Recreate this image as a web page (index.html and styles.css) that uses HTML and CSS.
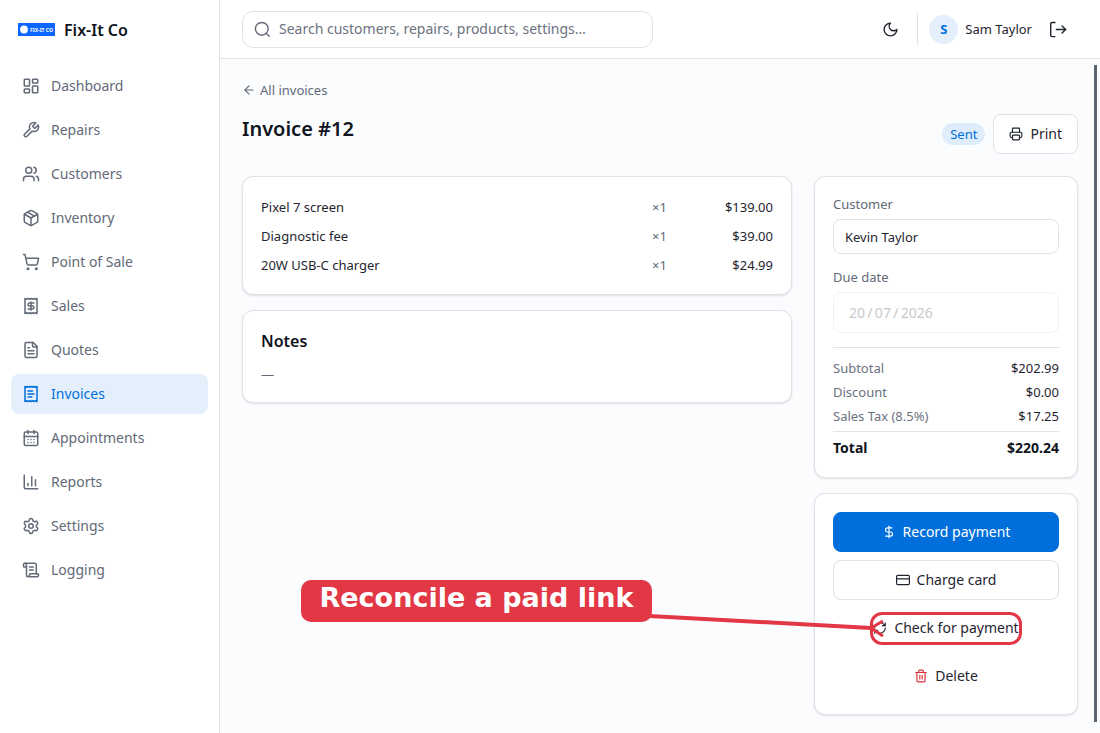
FILE: index.html
```html
<!DOCTYPE html>
<html lang="en">
<head>
<meta charset="UTF-8">
<meta name="viewport" content="width=device-width, initial-scale=1.0">
<title>Invoice #12 - Fix-It Co</title>
<link rel="stylesheet" href="styles.css">
</head>
<body>

<div class="app">
    <aside class="sidebar">
        <div class="brand">
            <svg class="brand-logo" viewBox="0 0 37 13" aria-hidden="true">
                <rect width="37" height="13" fill="#0b66ff"/>
                <circle cx="6" cy="6.500" r="3.900" fill="#fff"/>
                <text x="12" y="8.500" class="brand-logo-text">FIX-IT CO</text>
            </svg>
            <span class="brand-name">Fix-It Co</span>
        </div>

        <nav class="nav">
            <a href="#">
                <svg class="icon" viewBox="0 0 24 24"><rect width="7" height="9" x="3" y="3" rx="1"/><rect width="7" height="5" x="14" y="3" rx="1"/><rect width="7" height="9" x="14" y="12" rx="1"/><rect width="7" height="5" x="3" y="16" rx="1"/></svg>
                Dashboard
            </a>
            <a href="#">
                <svg class="icon" viewBox="0 0 24 24"><path d="M14.700 6.300a1 1 0 0 0 0 1.400l1.600 1.600a1 1 0 0 0 1.400 0l3.770-3.770a6 6 0 0 1-7.940 7.940l-6.910 6.910a2.120 2.120 0 0 1-3-3l6.910-6.910a6 6 0 0 1 7.940-7.940l-3.760 3.760z"/></svg>
                Repairs
            </a>
            <a href="#">
                <svg class="icon" viewBox="0 0 24 24"><path d="M16 21v-2a4 4 0 0 0-4-4H6a4 4 0 0 0-4 4v2"/><circle cx="9" cy="7" r="4"/><path d="M22 21v-2a4 4 0 0 0-3-3.870"/><path d="M16 3.130a4 4 0 0 1 0 7.750"/></svg>
                Customers
            </a>
            <a href="#">
                <svg class="icon" viewBox="0 0 24 24"><path d="M11 21.730a2 2 0 0 0 2 0l7-4A2 2 0 0 0 21 16V8a2 2 0 0 0-1-1.730l-7-4a2 2 0 0 0-2 0l-7 4A2 2 0 0 0 3 8v8a2 2 0 0 0 1 1.730z"/><path d="M12 22V12"/><path d="m3.300 7 8.700 5 8.700-5"/><path d="m7.500 4.270 9 5.150"/></svg>
                Inventory
            </a>
            <a href="#">
                <svg class="icon" viewBox="0 0 24 24"><circle cx="8" cy="21" r="1"/><circle cx="19" cy="21" r="1"/><path d="M2.050 2.050h2l2.660 12.420a2 2 0 0 0 2 1.580h9.780a2 2 0 0 0 1.950-1.570l1.650-7.430H5.120"/></svg>
                Point of Sale
            </a>
            <a href="#">
                <svg class="icon" viewBox="0 0 24 24"><path d="M4 2v20l2-1 2 1 2-1 2 1 2-1 2 1 2-1 2 1V2l-2 1-2-1-2 1-2-1-2 1-2-1-2 1Z"/><path d="M16 8h-6a2 2 0 1 0 0 4h4a2 2 0 1 1 0 4H8"/><path d="M12 17.500v-11"/></svg>
                Sales
            </a>
            <a href="#">
                <svg class="icon" viewBox="0 0 24 24"><path d="M15 2H6a2 2 0 0 0-2 2v16a2 2 0 0 0 2 2h12a2 2 0 0 0 2-2V7Z"/><path d="M14 2v4a2 2 0 0 0 2 2h4"/><path d="M10 9H8"/><path d="M16 13H8"/><path d="M16 17H8"/></svg>
                Quotes
            </a>
            <a href="#" class="active">
                <svg class="icon" viewBox="0 0 24 24"><path d="M4 2v20l2-1 2 1 2-1 2 1 2-1 2 1 2-1 2 1V2l-2 1-2-1-2 1-2-1-2 1-2-1-2 1Z"/><path d="M14 8H8"/><path d="M16 12H8"/><path d="M13 16H8"/></svg>
                Invoices
            </a>
            <a href="#">
                <svg class="icon" viewBox="0 0 24 24"><path d="M8 2v4"/><path d="M16 2v4"/><rect width="18" height="18" x="3" y="4" rx="2"/><path d="M3 10h18"/><path d="M8 14h.010"/><path d="M12 14h.010"/><path d="M16 14h.010"/><path d="M8 18h.010"/><path d="M12 18h.010"/><path d="M16 18h.010"/></svg>
                Appointments
            </a>
            <a href="#">
                <svg class="icon" viewBox="0 0 24 24"><path d="M3 3v16a2 2 0 0 0 2 2h16"/><path d="M18 17V9"/><path d="M13 17V5"/><path d="M8 17v-3"/></svg>
                Reports
            </a>
            <a href="#">
                <svg class="icon" viewBox="0 0 24 24"><path d="M9.671 4.136a2.340 2.340 0 0 1 4.659 0 2.340 2.340 0 0 0 3.319 1.915 2.340 2.340 0 0 1 2.330 4.033 2.340 2.340 0 0 0 0 3.831 2.340 2.340 0 0 1-2.330 4.033 2.340 2.340 0 0 0-3.319 1.915 2.340 2.340 0 0 1-4.659 0 2.340 2.340 0 0 0-3.320-1.915 2.340 2.340 0 0 1-2.330-4.033 2.340 2.340 0 0 0 0-3.831A2.340 2.340 0 0 1 6.350 6.051a2.340 2.340 0 0 0 3.319-1.915"/><circle cx="12" cy="12" r="3"/></svg>
                Settings
            </a>
            <a href="#">
                <svg class="icon" viewBox="0 0 24 24"><path d="M15 12h-5"/><path d="M15 8h-5"/><path d="M19 17V5a2 2 0 0 0-2-2H4"/><path d="M8 21h12a2 2 0 0 0 2-2v-1a1 1 0 0 0-1-1H11a1 1 0 0 0-1 1v1a2 2 0 1 1-4 0V5a2 2 0 1 0-4 0v2a1 1 0 0 0 1 1h3"/></svg>
                Logging
            </a>
        </nav>
    </aside>

    <div class="page">
        <header class="topbar">
            <label class="search">
                <svg class="icon" viewBox="0 0 24 24"><circle cx="11" cy="11" r="9"/><path d="m21.500 21.500-4-4"/></svg>
                <input type="search" aria-label="Search" placeholder="Search customers, repairs, products, settings…">
            </label>
            <div class="user-menu">
                <button class="icon-button" type="button" aria-label="Toggle dark mode">
                    <svg class="icon" viewBox="0 0 24 24"><path d="M12 3a6 6 0 0 0 9 9 9 9 0 1 1-9-9Z"/></svg>
                </button>
                <div class="user">
                    <span class="avatar">S</span>
                    <span>Sam Taylor</span>
                </div>
                <button class="icon-button" type="button" aria-label="Sign out">
                    <svg class="icon" viewBox="0 0 24 24"><path d="M7 22H3a2 2 0 0 1-2-2V4a2 2 0 0 1 2-2h4"/><path d="m17 17 5-5-5-5"/><path d="M22 12H9"/></svg>
                </button>
            </div>
        </header>

        <main class="content">
            <a class="back-link" href="#">
                <svg class="icon icon-small" viewBox="0 0 24 24"><path d="m12 19-7-7 7-7"/><path d="M19 12H5"/></svg>
                All invoices
            </a>
            <div class="title-row">
                <h1>Invoice #12</h1>
                <div class="title-actions">
                    <span class="badge">Sent</span>
                    <button class="button print-button" type="button">
                        <svg class="icon icon-small" viewBox="0 0 24 24"><path d="M6 18H4a2 2 0 0 1-2-2v-5a2 2 0 0 1 2-2h16a2 2 0 0 1 2 2v5a2 2 0 0 1-2 2h-2"/><path d="M6 9V3a1 1 0 0 1 1-1h10a1 1 0 0 1 1 1v6"/><rect x="6" y="14" width="12" height="8" rx="1"/></svg>
                        Print
                    </button>
                </div>
            </div>

            <div class="columns">
                <div class="column">
                    <section class="card items">
                        <table>
                            <tr><td>Pixel 7 screen</td><td class="qty">×1</td><td class="price">$139.00</td></tr>
                            <tr><td>Diagnostic fee</td><td class="qty">×1</td><td class="price">$39.00</td></tr>
                            <tr><td>20W USB-C charger</td><td class="qty">×1</td><td class="price">$24.99</td></tr>
                        </table>
                    </section>
                    <section class="card notes">
                        <h2>Notes</h2>
                        <p>—</p>
                    </section>
                </div>

                <div class="column">
                    <section class="card details">
                        <label for="customer">Customer</label>
                        <input id="customer" class="customer" type="text" value="Kevin Taylor">
                        <label for="due">Due date</label>
                        <input id="due" class="due" type="text" value="20&thinsp;/&thinsp;07&thinsp;/&thinsp;2026" disabled>
                        <dl class="totals">
                            <div><dt>Subtotal</dt><dd>$202.99</dd></div>
                            <div><dt>Discount</dt><dd>$0.00</dd></div>
                            <div><dt>Sales Tax (8.5%)</dt><dd>$17.25</dd></div>
                            <div class="total"><dt>Total</dt><dd>$220.24</dd></div>
                        </dl>
                    </section>

                    <section class="card actions">
                        <button class="button primary" type="button">
                            <svg class="icon icon-small" viewBox="0 0 24 24"><path d="M12 2v20"/><path d="M17 5H9.500a3.500 3.500 0 0 0 0 7h5a3.500 3.500 0 0 1 0 7H6"/></svg>
                            Record payment
                        </button>
                        <button class="button" type="button">
                            <svg class="icon icon-small" viewBox="0 0 24 24"><rect width="22" height="16" x="1" y="4" rx="2"/><path d="M1 10h22"/></svg>
                            Charge card
                        </button>
                        <div class="highlight">
                            <button class="button ghost" type="button">
                                <svg class="icon icon-small" viewBox="0 0 24 24"><path d="M3 12a9 9 0 0 1 9-9 9.750 9.750 0 0 1 6.740 2.740L21 8"/><path d="M21 3v5h-5"/><path d="M21 12a9 9 0 0 1-9 9 9.750 9.750 0 0 1-6.740-2.740L3 16"/><path d="M8 16H3v5"/></svg>
                                Check for payment
                            </button>
                            <!-- callout drawn over the page -->
                            <div class="ring">
                                <svg class="arrow" viewBox="0 0 240 30" aria-hidden="true"><path d="M0 6 L222 18" stroke-width="4"/><path d="M234 11 L222 18 L234 26" stroke-width="3"/></svg>
                                <div class="callout">Reconcile a paid link</div>
                            </div>
                        </div>
                        <button class="button ghost" type="button">
                            <svg class="icon icon-small danger" viewBox="0 0 24 24"><path d="M10 11v6"/><path d="M14 11v6"/><path d="M19 6v14a2 2 0 0 1-2 2H7a2 2 0 0 1-2-2V6"/><path d="M3 6h18"/><path d="M8 6V4a2 2 0 0 1 2-2h4a2 2 0 0 1 2 2v2"/></svg>
                            Delete
                        </button>
                    </section>
                </div>
            </div>
            <div class="scroll-thumb"></div>
        </main>
    </div>
</div>

</body>
</html>
```

FILE: styles.css
```css
* {
    box-sizing: border-box;
}
body {
    margin: 0;
    font-family: "Noto Sans", sans-serif;
    font-size: 13px;
    line-height: 20px;
    color: #1f2530;
    background-color: #fbfcfe;
}
h1, h2, p, dl, dd {
    margin: 0;
}
a {
    color: inherit;
    text-decoration: none;
}
button, input {
    font: inherit;
    color: inherit;
}
.app {
    display: grid;
    grid-template-columns: 220px 1fr;
    min-height: 100vh;
}
.icon {
    width: 18px;
    height: 18px;
    flex-shrink: 0;
    fill: none;
    stroke: currentColor;
    stroke-width: 2;
    stroke-linecap: round;
    stroke-linejoin: round;
}
.icon-small {
    width: 14px;
    height: 14px;
}

/* Sidebar */
.sidebar {
    background-color: #fff;
    border-right: 1px solid #dfe2e6;
}
.brand {
    display: flex;
    align-items: center;
    gap: 9px;
    height: 59px;
    padding: 0 18px;
}
.brand-logo {
    width: 37px;
    height: 13px;
}
.brand-logo-text {
    font-size: 5px;
    font-weight: 700;
    fill: #fff;
}
.brand-name {
    font-size: 16px;
    font-weight: 600;
    color: #10141c;
}
.nav {
    display: flex;
    flex-direction: column;
    gap: 4px;
    padding: 7px 11px;
}
.nav a {
    display: flex;
    align-items: center;
    gap: 11px;
    height: 40px;
    padding: 0 11px;
    border-radius: 8px;
    font-size: 14px;
    color: #626977;
}
.nav a.active {
    color: #006fdb;
    background-color: #e4effb;
}

/* Top bar */
.page {
    display: flex;
    flex-direction: column;
    min-width: 0;
}
.topbar {
    display: flex;
    align-items: center;
    justify-content: space-between;
    height: 59px;
    padding: 0 33px 0 22px;
    background-color: #fff;
    border-bottom: 1px solid #dfe2e6;
}
.search {
    display: flex;
    align-items: center;
    gap: 8px;
    width: 411px;
    height: 37px;
    padding: 0 11px;
    border: 1px solid #dfe2e6;
    border-radius: 11px;
    color: #626977;
}
.search .icon,
.user-menu .icon {
    width: 17px;
    height: 17px;
}
.search input {
    flex: 1;
    min-width: 0;
    padding: 0;
    border: 0;
    outline: 0;
    background: none;
    font-size: 14px;
}
.search input::placeholder {
    color: #6b7280;
}
.user-menu {
    display: flex;
    align-items: center;
    gap: 18px;
}
.icon-button {
    display: flex;
    padding: 0;
    border: 0;
    background: none;
}
.user {
    display: flex;
    align-items: center;
    gap: 7px;
    height: 32px;
    padding-left: 11px;
    border-left: 1px solid #dfe2e6;
}
.avatar {
    width: 29px;
    height: 29px;
    border-radius: 50%;
    line-height: 29px;
    text-align: center;
    font-weight: 700;
    color: #006fdb;
    background-color: #e4effb;
}

/* Invoice */
.content {
    position: relative;
    flex: 1;
    padding: 21px 22px 18px;
}
.back-link {
    display: flex;
    align-items: center;
    gap: 4px;
    width: fit-content;
    font-size: 13px;
    color: #626977;
}
.title-row {
    display: flex;
    justify-content: space-between;
    align-items: flex-start;
    margin-top: 14px;
    margin-bottom: 22px;
}
h1 {
    font-size: 20px;
    line-height: 30px;
    font-weight: 600;
    color: #10141c;
}
.title-actions {
    display: flex;
    align-items: center;
    gap: 8px;
}
.badge {
    padding: 1px 8px;
    border-radius: 11px;
    color: #006fdb;
    background-color: #dfecfb;
}
.columns {
    display: grid;
    grid-template-columns: 1fr 264px;
    gap: 22px;
    align-items: start;
}
.column {
    display: flex;
    flex-direction: column;
    gap: 15px;
}
.card {
    padding: 18px;
    border: 1px solid #dfe2e6;
    border-radius: 11px;
    background-color: #fff;
    box-shadow: 0 1px 2px rgba(16, 24, 40, 0.12);
}
.card.items {
    padding: 15px 18px;
}
.items table {
    width: 100%;
    border-collapse: collapse;
}
.items td {
    height: 29px;
    padding: 0;
}
.items .qty {
    width: 63px;
    color: #626977;
}
.items .price {
    width: 58px;
    text-align: right;
}
.notes h2 {
    margin-bottom: 10px;
    font-size: 16px;
    line-height: 25px;
    font-weight: 600;
    color: #10141c;
}
.notes p {
    color: #626977;
}
.card.details {
    padding-top: 17px;
}
.details label {
    display: block;
    margin-bottom: 5px;
    color: #626977;
}
.details input {
    display: block;
    width: 100%;
    margin-bottom: 13px;
    border: 1px solid #dfe2e6;
    border-radius: 8px;
    background-color: #fff;
}
.details .customer {
    height: 35px;
    padding: 0 11px;
}
.details .due {
    height: 41px;
    margin-bottom: 14px;
    padding: 0 15px;
    border-color: #f0f1f3;
    font-size: 14px;
    color: #c6c8cc;
}
.totals {
    padding-top: 8px;
    border-top: 1px solid #dfe2e6;
}
.totals div {
    display: flex;
    justify-content: space-between;
    line-height: 24px;
}
.totals dt {
    color: #6b7280;
}
.totals .total {
    margin-top: 3px;
    padding-top: 4px;
    border-top: 1px solid #dfe2e6;
    font-size: 14px;
    font-weight: 700;
    line-height: 23px;
}
.totals .total dt,
.totals .total dd {
    color: #10141c;
}

/* Buttons */
.button {
    display: flex;
    align-items: center;
    justify-content: center;
    gap: 7px;
    height: 40px;
    padding: 0 15px;
    border: 1px solid #dfe2e6;
    border-radius: 8px;
    background-color: #fff;
    font-size: 14px;
}
.button.primary {
    border-color: #006fdb;
    color: #fff;
    background-color: #006fdb;
}
.button.ghost {
    width: 100%;
    border-color: transparent;
    background: none;
}
.danger {
    color: #dc2f3c;
}
.actions {
    display: flex;
    flex-direction: column;
    gap: 8px;
}

/* Callout over the page */
.highlight {
    position: relative;
}
.ring {
    position: absolute;
    top: 4px;
    left: 37px;
    width: 152px;
    height: 33px;
    border: 3px solid #e23744;
    border-radius: 12px;
    pointer-events: none;
}
.arrow {
    position: absolute;
    top: -5px;
    left: -224px;
    width: 240px;
    height: 30px;
    fill: none;
    stroke: #e23744;
}
.callout {
    position: absolute;
    top: -35px;
    right: 367px;
    width: 351px;
    height: 42px;
    border-radius: 10px;
    font-family: "DejaVu Sans", sans-serif;
    font-size: 27px;
    font-weight: 700;
    line-height: 36px;
    text-align: center;
    white-space: nowrap;
    color: #fff;
    background-color: #e23744;
}
.scroll-thumb {
    position: absolute;
    top: 6px;
    right: 3px;
    bottom: 11px;
    width: 3px;
    background-color: #5b6270;
}
```
